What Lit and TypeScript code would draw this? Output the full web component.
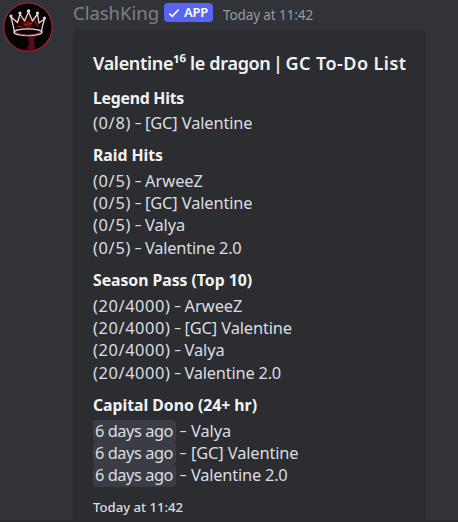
import { LitElement, html, css } from "lit";
import { customElement, property } from "lit/decorators.js";

/** Text whose tracking is adjusted so that it fills a given width. */
@customElement("fit-text")
class FitText extends LitElement {
  static styles = css`
    :host { display: inline-block; white-space: pre; }
    .text { display: inline-block; white-space: pre; }
  `;
  @property({ type: Number }) width = 0;
  @property() text = "";

  render() {
    return html`<span class="text">${this.text}</span>`;
  }

  async firstUpdated() {
    const el = this.renderRoot.querySelector(".text") as HTMLElement;
    const natural = el.getBoundingClientRect().width;
    const spacing = (this.width - natural) / this.text.length;
    el.style.letterSpacing = `${spacing.toFixed(3)}px`;
  }
}

type Row = [string, number, string, number];
interface Field { title: string; width: number; chips?: boolean; rows: Row[]; }

const GC: [string, number] = ["[GC] Valentine", 107.5];
const VALYA: [string, number] = ["Valya", 40];
const V2: [string, number] = ["Valentine 2.0", 96.5];
const ARWEEZ: [string, number] = ["ArweeZ", 58];

const FIELDS: Field[] = [
  { title: "Legend Hits", width: 91, rows: [["(0/8)", 38, ...GC]] },
  {
    title: "Raid Hits", width: 70,
    rows: [ARWEEZ, GC, VALYA, V2].map((n) => ["(0/5)", 38, ...n] as Row),
  },
  {
    title: "Season Pass (Top 10)", width: 159,
    rows: [ARWEEZ, GC, VALYA, V2].map((n) => ["(20/4000)", 77.5, ...n] as Row),
  },
  {
    title: "Capital Dono (24+ hr)", width: 164, chips: true,
    rows: [VALYA, GC, V2].map((n) => ["6 days ago", 78, ...n] as Row),
  },
];

@customElement("app-root")
class AppRoot extends LitElement {
  static styles = css`
    :host {
      display: block;
      height: 522px;
      overflow: hidden;
      background: #313338;
      color: #dbdee1;
      font-family: "Noto Sans", "Open Sans", sans-serif;
    }
    .message { display: flex; height: 520px; }
    .side { width: 73px; flex: none; }
    .avatar { display: block; margin: 1px 0 0 3px; }
    .body { width: 353px; display: flex; flex-direction: column; }
    .header { height: 30px; display: flex; align-items: flex-start; flex: none; }
    .author { font-size: 18.5px; line-height: 24px; color: #7d8080; margin-top: 1px; }
    .badge {
      display: flex; align-items: center; height: 19px; margin: 3px 0 0 5px; width: 49px;
      box-sizing: border-box; padding-left: 4px; border-radius: 4px; background: #5865f2;
      color: #fff; font-size: 13px; font-weight: 600; line-height: 18px;
    }
    .badge svg { margin-right: 4px; flex: none; }
    .badge fit-text { height: 19px; }
    .time { font-size: 13.5px; line-height: 20px; color: #949ba4; margin: 5px 0 0 10px; }
    .embed {
      flex: 1; background: #2b2d31; border-radius: 4px 4px 0 0;
      padding: 21px 0 0 20px; display: flex; flex-direction: column;
    }
    .title { display: flex; font-size: 18px; font-weight: 600; line-height: 25px; height: 25px; color: #f2f3f5; margin-bottom: 10.5px; }
    .bar { width: 15px; text-align: center; }
    .field { margin-bottom: 10.3px; }
    .name { font-size: 15.8px; font-weight: 700; line-height: 22.5px; height: 22.5px; color: #f2f3f5; margin-bottom: 2.7px; }
    .row { display: flex; font-size: 16.4px; line-height: 22.4px; height: 22.4px; }
    .dash { width: 14px; text-align: center; font-size: 13.5px; }
    .dash.after-chip { width: 14px; margin-left: -1px; margin-right: 1px; }
    .chip { width: 83px; height: 22.4px; box-sizing: border-box; padding-left: 2px; margin-right: 1px; border-radius: 3px; background: #3b3d44; }
    .foot { font-size: 13.2px; font-weight: 500; line-height: 20px; color: #dbdee1; margin-top: -0.6px; }
    .edge { height: 2px; background: #2e282f; }
  `;

  private avatar() {
    return html`<svg class="avatar" width="50" height="51" viewBox="0 0 50 51">
      <defs><radialGradient id="g"><stop offset="0" stop-color="#6d1410"/><stop offset="1" stop-color="#080306" stop-opacity="0"/></radialGradient></defs>
      <circle cx="25" cy="26" r="24.2" fill="#060305" stroke="#a51e2c" stroke-width="1.2"/>
      <ellipse cx="24" cy="22" rx="17" ry="11" fill="url(#g)"/>
      <path d="M25 35 L33 34 L31 38 L32 48 L24 49 L26 42Z" fill="#8d1127" opacity=".6"/>
      <path d="M14 19 L18 17 M21 24 L29 22 L24 27 M32 20 L35 26 M14 25 L19 26" fill="none" stroke="#a3301a" stroke-width="1"/>
      <g fill="none" stroke="#ecd2cf" stroke-width="1.3" stroke-linejoin="round">
        <path d="M11.5 31 L10 24 L8 16 L14.5 21.5 L17 13 L21.5 20 L25.5 11 L29.5 20 L34.5 13 L36 22 L41.5 18 L39.5 25 L38.5 31"/>
        <ellipse cx="25" cy="31.2" rx="14" ry="3.4"/>
      </g>
      <path d="M12 31.5 Q25 37 38 31.5" fill="none" stroke="#c9485a" stroke-width=".8"/>
      <g fill="#ecd2cf"><circle cx="8" cy="15" r="1.6"/><circle cx="17" cy="12" r="1.6"/><circle cx="25.5" cy="10" r="1.8"/><circle cx="34.5" cy="12" r="1.6"/><circle cx="41.5" cy="17" r="1.6"/></g>
    </svg>`;
  }

  render() {
    return html`
      <div class="message">
        <div class="side">${this.avatar()}</div>
        <div class="body">
          <div class="header">
            <fit-text class="author" .width=${86} .text=${"ClashKing"}></fit-text>
            <div class="badge">
              <svg width="12" height="10" viewBox="0 0 12 10"><path d="M1.3 5.6 L4.2 8.4 L10.7 1.5" fill="none" stroke="#fff" stroke-width="1.7"/></svg>
              <fit-text .width=${24} .text=${"APP"}></fit-text>
            </div>
            <fit-text class="time" .width=${90} .text=${"Today at 11:42"}></fit-text>
          </div>
          <div class="embed">
            <div class="title">
              <fit-text .width=${177.5} .text=${"Valentine¹⁶ le dragon"}></fit-text>
              <span class="bar">|</span>
              <fit-text .width=${121} .text=${"GC To-Do List"}></fit-text>
            </div>
            ${FIELDS.map((f) => html`
              <div class="field">
                <fit-text class="name" .width=${f.width} .text=${f.title}></fit-text>
                ${f.rows.map(([lead, lw, name, nw]) => html`
                  <div class="row">
                    <fit-text class=${f.chips ? "chip" : "lead"} .width=${lw} .text=${lead}></fit-text>
                    <span class=${f.chips ? "dash after-chip" : "dash"}>–</span>
                    <fit-text .width=${nw} .text=${name}></fit-text>
                  </div>`)}
              </div>`)}
            <fit-text class="foot" .width=${90} .text=${"Today at 11:42"}></fit-text>
          </div>
        </div>
      </div>
      <div class="edge"></div>
    `;
  }
}
